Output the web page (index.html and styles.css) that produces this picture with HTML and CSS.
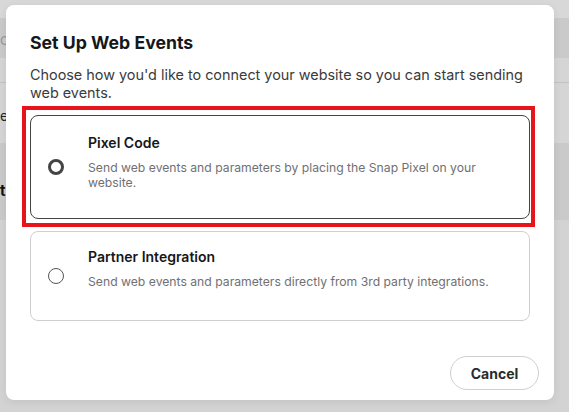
FILE: index.html
```html
<!DOCTYPE html>
<html>
<head>
<meta charset="utf-8">
<link rel="stylesheet" href="styles.css">
</head>
<body>
<div class="page">
  <div class="band band-top"></div>
  <div class="band band-search"><span class="frag frag-c">c</span></div>
  <div class="band band-gap"></div>
  <div class="band band-row"><span class="frag frag-e">e</span></div>
  <div class="band band-dark"><span class="frag frag-t">t</span></div>
  <div class="band band-rest"></div>
</div>

<div class="modal">
  <h1 class="modal-title">Set Up Web Events</h1>
  <p class="modal-desc">Choose how you'd like to connect your website so you can start sending web events.</p>

  <div class="options">
    <div class="option option-selected">
      <span class="radio radio-on"></span>
      <div class="option-text">
        <div class="option-title">Pixel Code</div>
        <div class="option-desc">Send web events and parameters by placing the Snap Pixel on your website.</div>
      </div>
    </div>
    <div class="option">
      <span class="radio"></span>
      <div class="option-text">
        <div class="option-title">Partner Integration</div>
        <div class="option-desc">Send web events and parameters directly from 3rd party integrations.</div>
      </div>
    </div>
  </div>

  <div class="footer">
    <button class="btn-cancel">Cancel</button>
  </div>
</div>

<div class="highlight"></div>
</body>
</html>
```

FILE: styles.css
```css
html, body {
  margin: 0;
  padding: 0;
}
body {
  width: 569px;
  height: 412px;
  overflow: hidden;
  background: #d5d5d5;
  font-family: Inter, "Liberation Sans", sans-serif;
  position: relative;
}
.page {
  display: flex;
  flex-direction: column;
  height: 412px;
}
.band {
  position: relative;
}
.band-top { height: 18px; background: #d8d8d8; }
.band-search { height: 40px; background: #cacaca; }
.band-gap { height: 24px; background: #d5d5d5; border-bottom: 1px solid #c2c2c2; }
.band-row { height: 60px; background: #d5d5d5; }
.band-dark { height: 77px; background: #cacaca; }
.band-rest { flex: 1; background: #d3d3d3; }
.frag {
  position: absolute;
  left: 0;
}
.frag-c { top: 12px; font-size: 15px; color: #9a9a9a; }
.frag-e { top: 24px; font-size: 14px; color: #222; }
.frag-t { top: 38px; font-size: 15px; font-weight: 700; color: #111; }

.modal {
  position: absolute;
  left: 6px;
  top: 5px;
  width: 548px;
  height: 395px;
  box-sizing: border-box;
  background: #fff;
  border-radius: 8px;
  padding: 26px 24px 0 24px;
  box-shadow: 0 2px 8px rgba(0,0,0,0.08);
  display: flex;
  flex-direction: column;
}
.modal-title {
  margin: 0;
  font-size: 17.7px;
  line-height: 24px;
  font-weight: 700;
  color: #161718;
}
.modal-desc {
  margin: 11px 0 0 0;
  font-size: 14.4px;
  line-height: 18px;
  color: #3a3b3c;
}
.options {
  margin-top: 13px;
  display: flex;
  flex-direction: column;
  gap: 12px;
}
.option {
  display: flex;
  align-items: flex-start;
  border: 1px solid #cfcfcf;
  border-radius: 8px;
  padding: 16px 20px 0 17px;
  height: 90px;
  box-sizing: border-box;
}
.option-selected {
  border-color: #444;
  height: 104px;
  padding-top: 18px;
}
.radio {
  flex: none;
  align-self: center;
  width: 16px;
  height: 16px;
  box-sizing: border-box;
  border: 1px solid #555;
  border-radius: 50%;
  margin-right: 24px;
}
.option .radio { margin-top: -16px; }
.option-selected .radio { margin-top: -18px; }
.radio-on {
  border: 3px solid #444;
}
.option-text {
  display: flex;
  flex-direction: column;
}
.option-title {
  font-size: 14px;
  line-height: 18px;
  font-weight: 600;
  color: #161718;
}
.option-desc {
  margin-top: 8px;
  font-size: 12.2px;
  line-height: 15px;
  color: #6f7072;
}
.footer {
  margin-top: auto;
  display: flex;
  justify-content: flex-end;
  padding-bottom: 10px;
}
.btn-cancel {
  width: 89px;
  height: 34px;
  border: 1px solid #cfcfcf;
  border-radius: 17px;
  background: #fff;
  font-family: inherit;
  font-size: 14px;
  font-weight: 700;
  color: #2a2b2c;
  margin-right: -9px;
}
.highlight {
  position: absolute;
  left: 22px;
  top: 106px;
  width: 513px;
  height: 121px;
  box-sizing: border-box;
  border: 4px solid #e8141c;
  pointer-events: none;
}
```
